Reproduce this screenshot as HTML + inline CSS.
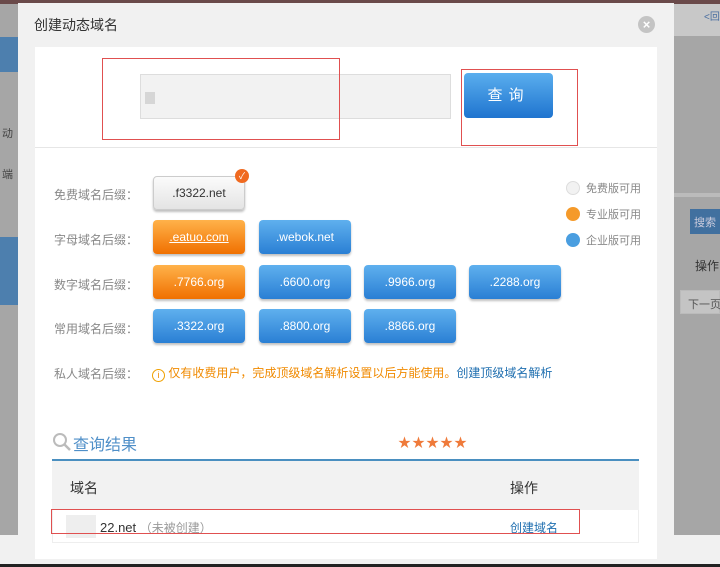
<!DOCTYPE html>
<html><head><meta charset="utf-8"><style>
*{margin:0;padding:0;box-sizing:border-box}
body{width:720px;height:567px;overflow:hidden;background:#a6a6a6;position:relative;font-family:"Liberation Sans","Noto Sans CJK SC",sans-serif;font-size:12px;color:#666}
.abs{position:absolute}
.modal{left:18px;top:3px;width:656px;height:560px;background:#f1f1f1}
.panel{left:35px;top:47px;width:622px;height:512px;background:#fff}
.btn{position:absolute;width:92px;height:34px;border-radius:4px;color:#fff;font-size:12px;display:flex;align-items:center;justify-content:center;box-shadow:0 2px 2px rgba(0,0,0,.25)}
.b{background:linear-gradient(#5fb0ee,#2a7fd4)}
.o{background:linear-gradient(#ffb24a,#f07000)}
.g{background:linear-gradient(#fbfbfb,#e4e4e4);color:#333;border:1px solid #ccc}
.lab{position:absolute;left:54px;color:#888;font-size:12px}
.leg{position:absolute;left:566px;font-size:11px;color:#888}
.dot{display:inline-block;width:14px;height:14px;border-radius:7px;vertical-align:-3px;margin-right:6px}
</style></head><body>
<div class="abs" style="left:0;top:0;width:720px;height:4px;background:#6a4a4a"></div>
<div class="abs" style="left:0;top:37px;width:18px;height:35px;background:#4d7fae"></div>
<div class="abs" style="left:0;top:237px;width:18px;height:68px;background:#4d7fae"></div>
<div class="abs" style="left:2px;top:125px;font-size:11px;color:#444">动</div>
<div class="abs" style="left:2px;top:166px;font-size:11px;color:#444">端</div>
<div class="abs" style="left:674px;top:4px;width:46px;height:32px;background:#c8c8c8"></div>
<div class="abs" style="left:704px;top:8px;font-size:10px;color:#4a6ea0">&lt;回</div>
<div class="abs" style="left:674px;top:193px;width:46px;height:4px;background:#bbb"></div>
<div class="abs" style="left:690px;top:209px;width:30px;height:25px;background:#41709f;color:#ccd;font-size:11px;padding:5px 4px;white-space:nowrap">搜索</div>
<div class="abs" style="left:695px;top:257px;font-size:12px;color:#333">操作</div>
<div class="abs" style="left:680px;top:290px;width:40px;height:24px;border:1px solid #bbb;background:#c4c4c4;font-size:11px;padding:5px 7px;color:#555;white-space:nowrap">下一页</div>
<div class="abs" style="left:0;top:535px;width:720px;height:29px;background:#f1f1f1"></div>
<div class="abs" style="left:0;top:564px;width:720px;height:3px;background:#222"></div>

<div class="abs modal"></div>
<div class="abs" style="left:34px;top:15px;font-size:14px;color:#333">创建动态域名</div>
<div class="abs" style="left:638px;top:16px;width:17px;height:17px;border-radius:9px;background:#c4c4c4;color:#fff;font-size:13px;font-weight:bold;text-align:center;line-height:17px">×</div>
<div class="abs panel"></div>
<div class="abs" style="left:35px;top:147px;width:622px;height:1px;background:#e6e6e6"></div>
<div class="abs" style="left:140px;top:74px;width:311px;height:45px;background:#f2f2f2;border:1px solid #ddd"></div>
<div class="abs" style="left:145px;top:92px;width:10px;height:12px;background:#d6d6d6"></div>
<div class="abs" style="left:102px;top:58px;width:238px;height:82px;border:1px solid #e05050"></div>
<div class="abs" style="left:464px;top:73px;width:89px;height:45px;border-radius:4px;background:linear-gradient(#5aaeee,#1f74cf);color:#fff;font-size:15px;text-align:center;line-height:45px;letter-spacing:6px">查询</div>
<div class="abs" style="left:461px;top:69px;width:117px;height:77px;border:1px solid #e05050"></div>

<div class="lab" style="top:186px">免费域名后缀：</div>
<div class="btn g" style="left:153px;top:176px;width:92px">.f3322.net</div>
<div class="abs" style="left:235px;top:169px;width:14px;height:14px;border-radius:7px;background:#f06a20;color:#fff;font-size:9px;text-align:center;line-height:14px">✓</div>
<div class="lab" style="top:231px">字母域名后缀：</div>
<div class="btn o" style="left:153px;top:220px;text-decoration:underline">.eatuo.com</div>
<div class="btn b" style="left:259px;top:220px">.webok.net</div>
<div class="lab" style="top:276px">数字域名后缀：</div>
<div class="btn o" style="left:153px;top:265px">.7766.org</div>
<div class="btn b" style="left:259px;top:265px">.6600.org</div>
<div class="btn b" style="left:364px;top:265px">.9966.org</div>
<div class="btn b" style="left:469px;top:265px">.2288.org</div>
<div class="lab" style="top:320px">常用域名后缀：</div>
<div class="btn b" style="left:153px;top:309px">.3322.org</div>
<div class="btn b" style="left:259px;top:309px">.8800.org</div>
<div class="btn b" style="left:364px;top:309px">.8866.org</div>
<div class="lab" style="top:365px">私人域名后缀：</div>
<div class="abs" style="left:152px;top:364px;font-size:12px;color:#f08a00"><span style="display:inline-block;width:13px;height:13px;border:1px solid #f0a000;border-radius:7px;font-size:9px;text-align:center;line-height:11px;vertical-align:-1px">i</span> 仅有收费用户，完成顶级域名解析设置以后方能使用。<span style="color:#1f6fb0">创建顶级域名解析</span></div>

<div class="leg" style="top:180px"><span class="dot" style="background:#f2f2f2;border:1px solid #ddd"></span>免费版可用</div>
<div class="leg" style="top:206px"><span class="dot" style="background:#f59a2a"></span>专业版可用</div>
<div class="leg" style="top:232px"><span class="dot" style="background:#4a9ee0"></span>企业版可用</div>

<svg class="abs" style="left:52px;top:432px" width="20" height="20" viewBox="0 0 20 20"><circle cx="8" cy="8" r="6" fill="none" stroke="#bbb" stroke-width="2"/><path d="M12.5 12.5L18 18" stroke="#bbb" stroke-width="2.5"/></svg>
<div class="abs" style="left:73px;top:431px;font-size:16px;color:#4f8fc8">查询结果</div>
<div class="abs" style="left:398px;top:432px;font-size:13px;color:#ef7a3a;letter-spacing:1px">★★★★★</div>
<div class="abs" style="left:52px;top:459px;width:587px;height:2px;background:#4a8fc0"></div>
<div class="abs" style="left:52px;top:461px;width:587px;height:49px;background:#f2f2f2"></div>
<div class="abs" style="left:70px;top:478px;font-size:14px;color:#333">域名</div>
<div class="abs" style="left:510px;top:478px;font-size:14px;color:#333">操作</div>
<div class="abs" style="left:52px;top:510px;width:587px;height:33px;background:#fff;border:1px solid #eee;border-top:none"></div>
<div class="abs" style="left:66px;top:515px;width:30px;height:23px;background:#eee"></div>
<div class="abs" style="left:100px;top:519px;font-size:13px;color:#333">22.net <span style="font-size:12px;color:#999">（未被创建）</span></div>
<div class="abs" style="left:510px;top:519px;font-size:12px;color:#1f6fb0">创建域名</div>
<div class="abs" style="left:51px;top:509px;width:529px;height:25px;border:1px solid #e05050"></div>
</body></html>
